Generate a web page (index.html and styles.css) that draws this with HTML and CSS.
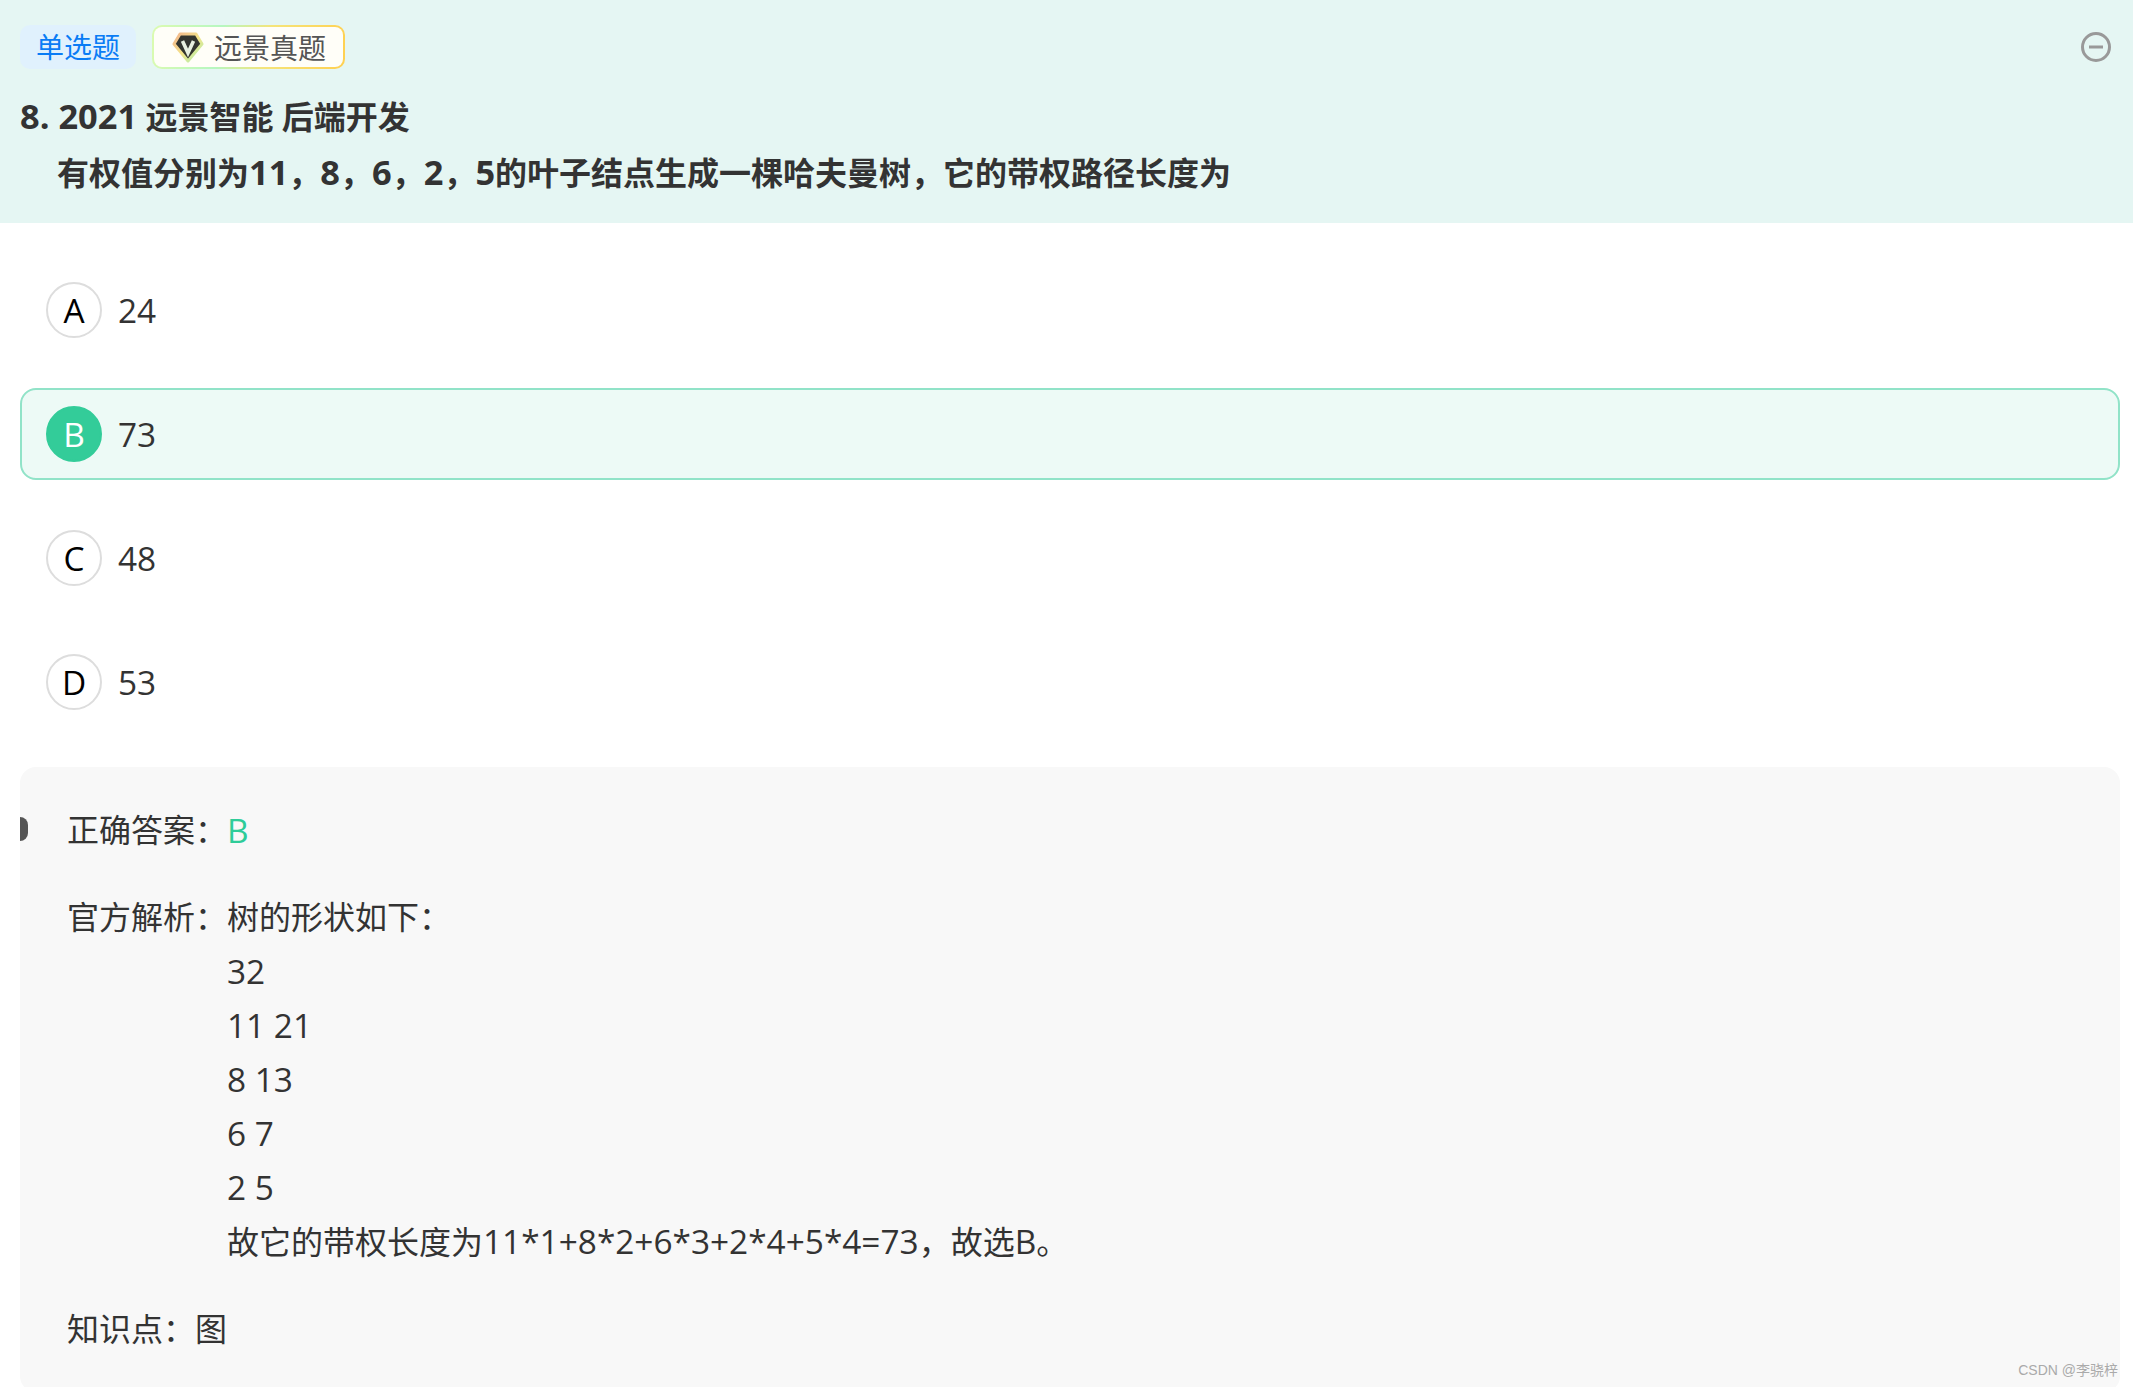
FILE: index.html
```html
<!DOCTYPE html>
<html lang="zh-CN">
<head>
    <meta charset="UTF-8">
    <title>远景真题</title>
    <link rel="stylesheet" href="styles.css">
</head>
<body>
    <div class="question-head">
        <div class="tags">
            <span class="tag tag-type">单选题</span>
            <span class="tag-vip">
                <span class="tag-vip-inner">
                    <svg class="vip-icon" viewBox="0 0 32 31" width="32" height="31">
                        <defs>
                            <linearGradient id="gem" x1="0" y1="0" x2="1" y2="1">
                                <stop offset="0" stop-color="#f2b48c"/>
                                <stop offset="0.5" stop-color="#f4e48a"/>
                                <stop offset="1" stop-color="#a8f0b0"/>
                            </linearGradient>
                        </defs>
                        <path d="M8 2H24L30 12L16 29L2 12Z" fill="#33352f" stroke="url(#gem)" stroke-width="3" stroke-linejoin="round"/>
                        <path d="M10.5 9L16 21L21.5 9" fill="none" stroke="#e8f0e0" stroke-width="3.6"/>
                    </svg>
                    远景真题
                </span>
            </span>
            <svg class="collapse-icon" viewBox="0 0 30 30" width="30" height="30">
                <circle cx="15" cy="15" r="13.5" fill="none" stroke="#999" stroke-width="3"/>
                <path d="M8 15H22" stroke="#999" stroke-width="3"/>
            </svg>
        </div>
        <div class="title"><span class="num">8. 2021</span> 远景智能 后端开发</div>
        <div class="stem">有权值分别为<span class="num">11</span>，<span class="num">8</span>，<span class="num">6</span>，<span class="num">2</span>，<span class="num">5</span>的叶子结点生成一棵哈夫曼树，它的带权路径长度为</div>
    </div>

    <div class="options">
        <div class="option"><span class="letter">A</span><span class="num">24</span></div>
        <div class="option option-right"><span class="letter">B</span><span class="num">73</span></div>
        <div class="option"><span class="letter">C</span><span class="num">48</span></div>
        <div class="option"><span class="letter">D</span><span class="num">53</span></div>
    </div>

    <div class="analysis">
        <span class="notch"></span>
        <div class="row">
            <span class="row-label">正确答案：</span>
            <span class="answer num">B</span>
        </div>
        <div class="row">
            <span class="row-label">官方解析：</span>
            <div class="row-body">
                <div>树的形状如下：</div>
                <div class="num">32</div>
                <div class="num">11 21</div>
                <div class="num">8 13</div>
                <div class="num">6 7</div>
                <div class="num">2 5</div>
                <div>故它的带权长度为<span class="num">11*1+8*2+6*3+2*4+5*4=73</span>，故选<span class="num">B</span>。</div>
            </div>
        </div>
        <div class="row">
            <span class="row-label">知识点：</span>
            <span>图</span>
        </div>
    </div>

    <div class="watermark">CSDN @李骁梓</div>
</body>
</html>
```

FILE: styles.css
```css
/* Page */
html, body {
    margin: 0;
    padding: 0;
    height: 1387px;
    overflow: hidden;
}

body {
    position: relative;
    background-color: #fff;
    color: #333;
    font-family: "Open Sans", "Noto Sans CJK SC", sans-serif;
    font-size: 32px;
}

/* Latin and digits run a bit larger than the CJK text */
.num {
    font-size: 33.4px;
}

/* Header */
.question-head {
    height: 223px;
    box-sizing: border-box;
    padding: 25px 13px 0 20px;
    background-color: #e5f6f3;
}

.tags {
    display: flex;
    align-items: center;
    height: 44px;
}

.tag {
    width: 116px;
    height: 44px;
    line-height: 44px;
    text-align: center;
    font-size: 28px;
    border-radius: 10px;
    background-color: #e0f1fd;
    color: #0a7cf5;
}

.tag-vip {
    margin-left: 16px;
    padding: 2px;
    width: 193px;
    height: 44px;
    box-sizing: border-box;
    border-radius: 10px;
    background: linear-gradient(100deg, #dcfbb0 0%, #b6f7c0 35%, #f5e47a 60%, #ffd050 100%);
}

.tag-vip-inner {
    display: flex;
    align-items: center;
    height: 40px;
    padding-left: 18px;
    border-radius: 8px;
    background-color: #fffef8;
    color: #555;
    font-size: 28px;
}

.vip-icon {
    margin-right: 10px;
}

.collapse-icon {
    margin-left: auto;
    margin-right: 9px;
}

.title {
    margin-top: 20px;
    height: 56px;
    line-height: 56px;
    font-weight: bold;
}

.stem {
    padding-left: 37px;
    height: 56px;
    line-height: 56px;
    font-weight: bold;
}

.title .num,
.stem .num {
    font-size: 34.4px;
    line-height: 1;
}

/* Options */
.options {
    padding: 41px 13px 0 20px;
}

.option {
    display: flex;
    align-items: center;
    height: 92px;
    box-sizing: border-box;
    margin-bottom: 32px;
    padding-left: 24px;
    border: 2px solid transparent;
    border-radius: 16px;
}

.option-right {
    border-color: #91e3c8;
    background-color: #edfaf6;
}

.letter {
    width: 56px;
    height: 56px;
    box-sizing: border-box;
    margin-right: 16px;
    border: 2px solid #ddd;
    border-radius: 50%;
    line-height: 52px;
    text-align: center;
    font-size: 33.4px;
    color: #000;
}

.option-right .letter {
    border-color: #33cc99;
    background-color: #33cc99;
    color: #fff;
}

/* Analysis */
.analysis {
    position: relative;
    margin: 39px 13px 0 20px;
    padding: 36px 47px 40px;
    height: 625px;
    box-sizing: border-box;
    border-radius: 16px;
    background-color: #f8f8f8;
}

.notch {
    position: absolute;
    left: 0;
    top: 50px;
    width: 8px;
    height: 24px;
    border-radius: 0 8px 8px 0;
    background-color: #555;
}

.row {
    display: flex;
    margin-bottom: 33px;
    line-height: 54px;
}

.row-label {
    flex-shrink: 0;
}

.answer {
    color: #2ecc99;
}

/* Watermark */
.watermark {
    position: absolute;
    right: 15px;
    bottom: 8px;
    font-family: "Liberation Sans", "Noto Sans CJK SC", sans-serif;
    font-size: 14px;
    color: #aaa;
}
```
